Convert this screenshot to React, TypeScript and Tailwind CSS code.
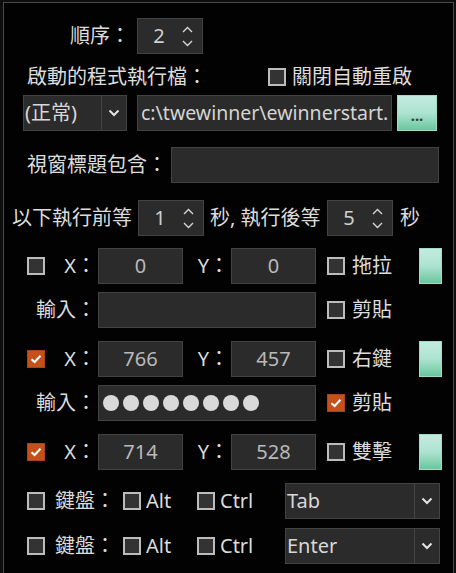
const font = { fontFamily: '"Noto Sans", "Noto Sans CJK TC", sans-serif' };

function Check({ checked = false }: { checked?: boolean }) {
  if (checked) {
    return (
      <div className="flex h-[18px] w-[18px] shrink-0 items-center justify-center border border-[#a8441a] bg-[#c4501a]">
        <svg width="12" height="10" viewBox="0 0 12 10">
          <path d="M1.5 5.2 L4.6 8 L10.5 1.8" fill="none" stroke="#ffffff" strokeWidth="2" />
        </svg>
      </div>
    );
  }
  return <div className="h-[18px] w-[18px] shrink-0 border-2 border-[#bdbdbd] bg-[#333333]" />;
}

function Box({ className = "", children }: { className?: string; children?: React.ReactNode }) {
  return (
    <div className={`flex h-[36px] shrink-0 items-center border border-[#434343] bg-[#2b2b2b] ${className}`}>
      {children}
    </div>
  );
}

function Spinner({ value }: { value: string }) {
  return (
    <Box className="w-[66px]">
      <span className="w-[42px] text-center text-[#cfcfcf]">{value}</span>
      <div className="ml-[2px] flex flex-col items-center gap-[7px]">
        <svg width="11" height="7" viewBox="0 0 11 7">
          <path d="M1 6 L5.5 1.5 L10 6" fill="none" stroke="#d6d6d6" strokeWidth="1.4" />
        </svg>
        <svg width="11" height="7" viewBox="0 0 11 7">
          <path d="M1 1 L5.5 5.5 L10 1" fill="none" stroke="#d6d6d6" strokeWidth="1.4" />
        </svg>
      </div>
    </Box>
  );
}

function Chevron() {
  return (
    <svg width="12" height="8" viewBox="0 0 12 8">
      <path d="M1.5 1.5 L6 6 L10.5 1.5" fill="none" stroke="#e4e4e4" strokeWidth="2" />
    </svg>
  );
}

function Select({ value, className, textWidth }: { value: string; className: string; textWidth: string }) {
  return (
    <Box className={className}>
      <span className={`${textWidth} h-full shrink-0 border-r border-[#444444] pl-[1px] leading-[34px] text-[#d8d8d8]`}>
        {value}
      </span>
      <div className="flex flex-1 items-center justify-center">
        <Chevron />
      </div>
    </Box>
  );
}

function MintButton({ className = "", children }: { className?: string; children?: React.ReactNode }) {
  return (
    <div
      className={`flex h-[36px] shrink-0 items-end justify-center border border-[#9fdcc6] bg-gradient-to-b from-[#c3ebdf] via-[#ace3d1] to-[#68c79f] ${className}`}
    >
      {children}
    </div>
  );
}

function XYRow({ checked, x, y, label }: { checked: boolean; x: string; y: string; label: string }) {
  return (
    <div className="flex h-[36px] items-center pr-[11px]">
      <div className="ml-[23px]">
        <Check checked={checked} />
      </div>
      <span className="w-[51px] text-right">X：</span>
      <Box className="ml-[2px] w-[85px] justify-center text-[#b9b9b9]">{x}</Box>
      <span className="w-[46px] text-right">Y：</span>
      <Box className="ml-[2px] w-[85px] justify-center text-[#b9b9b9]">{y}</Box>
      <div className="ml-[11px]">
        <Check />
      </div>
      <span className="ml-[7px]">{label}</span>
      <MintButton className="ml-auto w-[23px]" />
    </div>
  );
}

function InputRow({ dots, paste }: { dots?: boolean; paste: boolean }) {
  return (
    <div className="flex h-[36px] items-center">
      <span className="w-[92px] text-right">輸入：</span>
      <Box className="ml-[2px] w-[218px] gap-[4px] pl-[4px]">
        {dots
          ? Array.from({ length: 8 }).map((_, i) => (
              <div key={i} className="h-[16px] w-[16px] rounded-full bg-[#d9d9d9]" />
            ))
          : null}
      </Box>
      <div className="ml-[11px]">
        <Check checked={paste} />
      </div>
      <span className="ml-[7px]">剪貼</span>
    </div>
  );
}

function KeyRow({ value }: { value: string }) {
  return (
    <div className="flex h-[36px] items-center">
      <div className="ml-[23px]">
        <Check />
      </div>
      <span className="ml-[10px] w-[68px]">鍵盤：</span>
      <Check />
      <span className="ml-[5px] w-[51px]">Alt</span>
      <Check />
      <span className="ml-[5px] w-[65px]">Ctrl</span>
      <Select value={value} className="w-[155px]" textWidth="w-[129px]" />
    </div>
  );
}

export default function App() {
  return (
    <div className="h-[573px] w-[456px] overflow-hidden bg-[#0e0e0e] pl-[3px] pt-[2px]" style={font}>
      <div className="flex h-[580px] w-[451px] flex-col border-l border-r border-t border-[#4a4a4a] bg-[#020202] text-[20px] leading-none text-[#dcdcdc]">
        <div className="mt-[15px] flex h-[36px] items-center">
          <span className="w-[126px] text-right">順序：</span>
          <div className="ml-[7px]">
            <Spinner value="2" />
          </div>
        </div>

        <div className="mt-[11px] flex h-[24px] items-center">
          <span className="ml-[23px] w-[241px]">啟動的程式執行檔：</span>
          <Check />
          <span className="ml-[6px]">關閉自動重啟</span>
        </div>

        <div className="mt-[6px] flex h-[36px] items-center">
          <div className="ml-[19px]">
            <Select value="(正常)" className="w-[104px]" textWidth="w-[78px]" />
          </div>
          <Box className="ml-[10px] w-[255px] overflow-hidden whitespace-nowrap pl-[3px] text-[#d4d4d4]">
            <span className="text-[19.5px]">c:\twewinner\ewinnerstart.</span>
          </Box>
          <MintButton className="ml-[5px] w-[40px] pb-[7px] text-[15px] font-bold text-[#3a3a3a]">
            ...
          </MintButton>
        </div>

        <div className="mt-[16px] flex h-[36px] items-center">
          <span className="w-[163px] text-right">視窗標題包含：</span>
          <Box className="ml-[4px] w-[268px]" />
        </div>

        <div className="mt-[17px] flex h-[36px] items-center">
          <span className="ml-[8px] w-[126px]">以下執行前等</span>
          <Spinner value="1" />
          <span className="ml-[6px] w-[117px]">秒, 執行後等</span>
          <Spinner value="5" />
          <span className="ml-[7px]">秒</span>
        </div>

        <div className="mt-[12px]">
          <XYRow checked={false} x="0" y="0" label="拖拉" />
        </div>
        <div className="mt-[8px]">
          <InputRow paste={false} />
        </div>
        <div className="mt-[13px]">
          <XYRow checked x="766" y="457" label="右鍵" />
        </div>
        <div className="mt-[8px]">
          <InputRow dots paste />
        </div>
        <div className="mt-[13px]">
          <XYRow checked x="714" y="528" label="雙擊" />
        </div>
        <div className="mt-[13px]">
          <KeyRow value="Tab" />
        </div>
        <div className="mt-[9px]">
          <KeyRow value="Enter" />
        </div>
      </div>
    </div>
  );
}
